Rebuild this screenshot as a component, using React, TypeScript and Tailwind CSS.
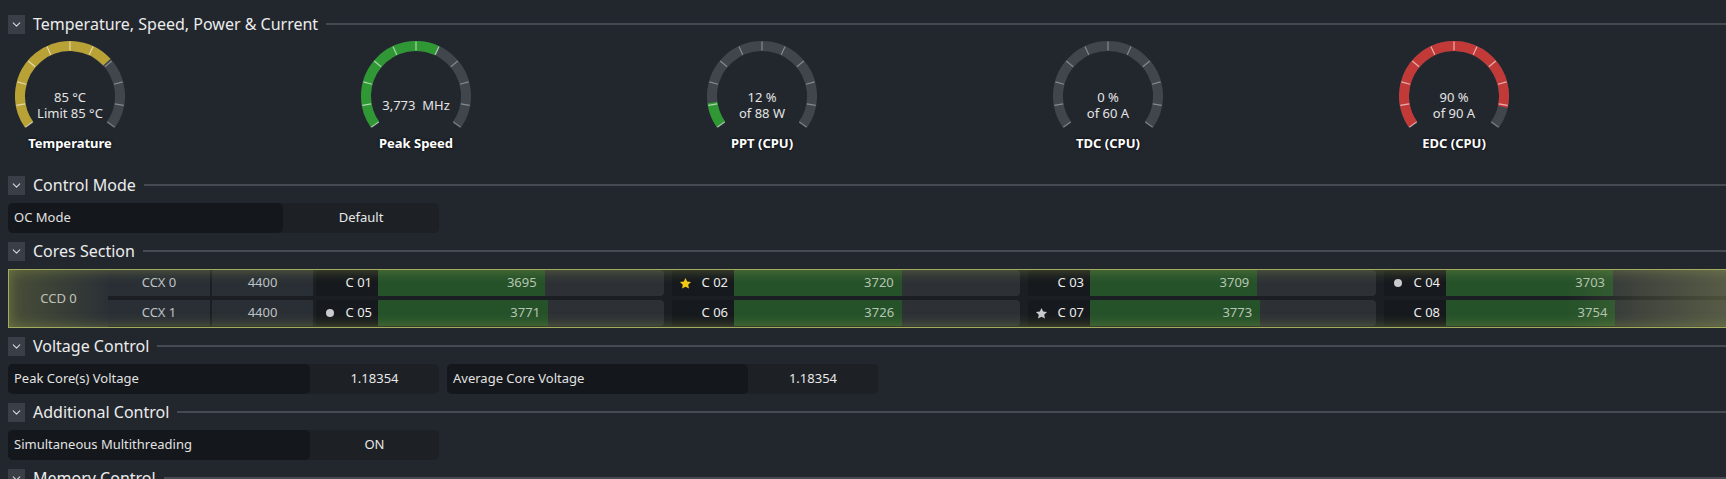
import { ChevronDown } from "lucide-react";

const polar = (a: number, r: number) => {
  const rad = (a * Math.PI) / 180;
  return [55 + r * Math.sin(rad), 55 - r * Math.cos(rad)];
};

const arc = (a1: number, a2: number, r: number) => {
  const [x1, y1] = polar(a1, r);
  const [x2, y2] = polar(a2, r);
  return `M ${x1} ${y1} A ${r} ${r} 0 ${a2 - a1 > 180 ? 1 : 0} 1 ${x2} ${y2}`;
};

interface GaugeProps {
  fill: number;
  color: string;
  lines: string[];
  label: string;
}

const Gauge = ({ fill, color, lines, label }: GaugeProps) => {
  const end = -125 + 250 * fill;
  const ticks = Array.from({ length: 11 }, (_, i) => -125 + i * 25);
  return (
    <div className="flex w-[110px] flex-col items-center">
      <div className="relative h-[92px] w-[110px]">
        <svg width="110" height="92" viewBox="0 0 110 92">
          <path d={arc(-125, 125, 50)} stroke="#41454c" strokeWidth="10" fill="none" />
          {fill > 0 && <path d={arc(-125, end, 50)} stroke={color} strokeWidth="10" fill="none" />}
          {ticks.map((a) => {
            const [x1, y1] = polar(a, 45.5);
            const [x2, y2] = polar(a, 54.5);
            const on = a <= end && fill > 0;
            return (
              <line
                key={a}
                x1={x1}
                y1={y1}
                x2={x2}
                y2={y2}
                stroke={on ? "rgba(255,255,255,0.6)" : "rgba(190,194,200,0.55)"}
                strokeWidth="1.2"
              />
            );
          })}
        </svg>
        <div className="absolute inset-x-0 top-[40px] flex h-[48px] flex-col items-center justify-center text-[13px] leading-[16px] text-[#e4e4e4]">
          {lines.map((l) => (
            <span key={l} className="whitespace-pre">
              {l}
            </span>
          ))}
        </div>
      </div>
      <div className="h-[20px] whitespace-nowrap text-[13px] font-bold leading-[20px] text-white [text-shadow:0_0_3px_rgba(0,0,0,0.9)]">
        {label}
      </div>
    </div>
  );
};

const Header = ({ title }: { title: string }) => (
  <div className="flex h-[22px] shrink-0 items-center">
    <div className="flex h-[19px] w-[17px] items-center justify-center bg-[#3a3f47]">
      <ChevronDown size={13} strokeWidth={2} className="text-[#d5d8dc]" />
    </div>
    <span className="ml-2 text-[16px] leading-none text-[#ececec]">{title}</span>
    <div className="ml-2 h-[2px] flex-1 bg-[#464b53]" />
  </div>
);

interface FieldProps {
  label: string;
  value: string;
  labelW: string;
}

const Field = ({ label, value, labelW }: FieldProps) => (
  <div className="flex h-[30px] w-[431px] overflow-hidden rounded-[5px] bg-[#1d2126] text-[13px]">
    <div className={`flex items-center rounded-r-[5px] bg-[#14171b] pl-[6px] text-[#e2e2e2] ${labelW}`}>
      {label}
    </div>
    <div className="flex flex-1 items-center justify-center text-[#e8e8e8]">{value}</div>
  </div>
);

const Star = ({ color }: { color: string }) => (
  <svg width="13" height="13" viewBox="0 0 24 24">
    <path
      d="M12 1.8l3.1 6.6 7.1.9-5.2 4.9 1.4 7.1L12 17.8l-6.4 3.5 1.4-7.1L1.8 9.3l7.1-.9z"
      fill={color}
    />
  </svg>
);

interface Core {
  name: string;
  value: number;
  mark?: "gold" | "star" | "dot";
}

const rows: { ccx: string; cores: Core[] }[] = [
  {
    ccx: "CCX 0",
    cores: [
      { name: "C 01", value: 3695 },
      { name: "C 02", value: 3720, mark: "gold" },
      { name: "C 03", value: 3709 },
      { name: "C 04", value: 3703, mark: "dot" },
    ],
  },
  {
    ccx: "CCX 1",
    cores: [
      { name: "C 05", value: 3771, mark: "dot" },
      { name: "C 06", value: 3726 },
      { name: "C 07", value: 3773, mark: "star" },
      { name: "C 08", value: 3754 },
    ],
  },
];

const CoreCell = ({ core }: { core: Core }) => (
  <div className="flex h-[26px] w-[348px] overflow-hidden rounded-[4px] text-[13px]">
    <div className="flex w-[62px] items-center justify-between bg-[#16191d] pl-[7px] pr-[6px] text-[#eeeeee]">
      <span className="flex w-[13px] items-center justify-center">
        {core.mark === "gold" && <Star color="#f3cb12" />}
        {core.mark === "star" && <Star color="#c9cbce" />}
        {core.mark === "dot" && <span className="h-[8px] w-[8px] rounded-full bg-[#c9cbce]" />}
      </span>
      <span>{core.name}</span>
    </div>
    <div className="flex flex-1 bg-[#2d3136]">
      <div
        className="flex items-center justify-end bg-[#26522a] pr-[8px] text-[#b7c6b4]"
        style={{ width: `${(core.value / 6340) * 100}%` }}
      >
        {core.value}
      </div>
    </div>
  </div>
);

const App = () => {
  return (
    <div className="h-[479px] w-[1726px] overflow-hidden bg-[#22272e] pl-2 pt-[13px] font-['Noto_Sans',sans-serif]">
      <div className="flex flex-col">
        <Header title="Temperature, Speed, Power & Current" />
        <div className="mt-[6px] grid grid-cols-[repeat(5,346px)] pl-[7px]">
          <Gauge fill={0.69} color="#b8a135" lines={["85 °C", "Limit 85 °C"]} label="Temperature" />
          <Gauge fill={0.6} color="#2f9834" lines={["3,773  MHz"]} label="Peak Speed" />
          <Gauge fill={0.11} color="#2f9834" lines={["12 %", "of 88 W"]} label="PPT (CPU)" />
          <Gauge fill={0} color="#2f9834" lines={["0 %", "of 60 A"]} label="TDC (CPU)" />
          <Gauge fill={0.91} color="#c13a38" lines={["90 %", "of 90 A"]} label="EDC (CPU)" />
        </div>

        <div className="mt-[21px]">
          <Header title="Control Mode" />
        </div>
        <div className="mt-[7px]">
          <Field label="OC Mode" value="Default" labelW="w-[275px]" />
        </div>

        <div className="mt-[7px]">
          <Header title="Cores Section" />
        </div>
        <div className="relative mt-[7px] flex h-[59px] w-[1740px] shrink-0 border border-[#a3ab5f] bg-[#1b1f24]">
          <div className="flex w-[99px] items-center justify-center bg-[#2b3036] text-[13px] text-[#c9cbce]">
            CCD 0
          </div>
          <div className="flex flex-col gap-[4px] pt-[0px]">
            {rows.map((r) => (
              <div key={r.ccx} className="flex h-[26px] text-[13px]">
                <div className="flex w-[102px] items-center justify-center bg-[#2a2f35] text-[#bfc3c7]">{r.ccx}</div>
                <div className="ml-[2px] flex w-[101px] items-center justify-center bg-[#2a2f35] text-[#bfc3c7]">
                  4400
                </div>
                <div className="ml-[3px] flex gap-[8px]">
                  {r.cores.map((c) => (
                    <CoreCell key={c.name} core={c} />
                  ))}
                </div>
              </div>
            ))}
          </div>
          <div className="pointer-events-none absolute inset-0 shadow-[inset_0_0_14px_rgba(165,175,85,0.45)]" />
          <div className="pointer-events-none absolute inset-y-0 left-0 w-[100px] bg-gradient-to-r from-[rgba(140,150,60,0.3)] to-transparent" />
          <div className="pointer-events-none absolute inset-y-0 right-0 w-[180px] bg-gradient-to-r from-transparent to-[rgba(150,155,95,0.45)]" />
        </div>

        <div className="mt-[7px]">
          <Header title="Voltage Control" />
        </div>
        <div className="mt-[7px] flex gap-[8px]">
          <Field label="Peak Core(s) Voltage" value="1.18354" labelW="w-[302px]" />
          <Field label="Average Core Voltage" value="1.18354" labelW="w-[301px]" />
        </div>

        <div className="mt-[7px]">
          <Header title="Additional Control" />
        </div>
        <div className="mt-[7px]">
          <Field label="Simultaneous Multithreading" value="ON" labelW="w-[302px]" />
        </div>

        <div className="mt-[7px]">
          <Header title="Memory Control" />
        </div>
      </div>
    </div>
  );
};

export default App;
